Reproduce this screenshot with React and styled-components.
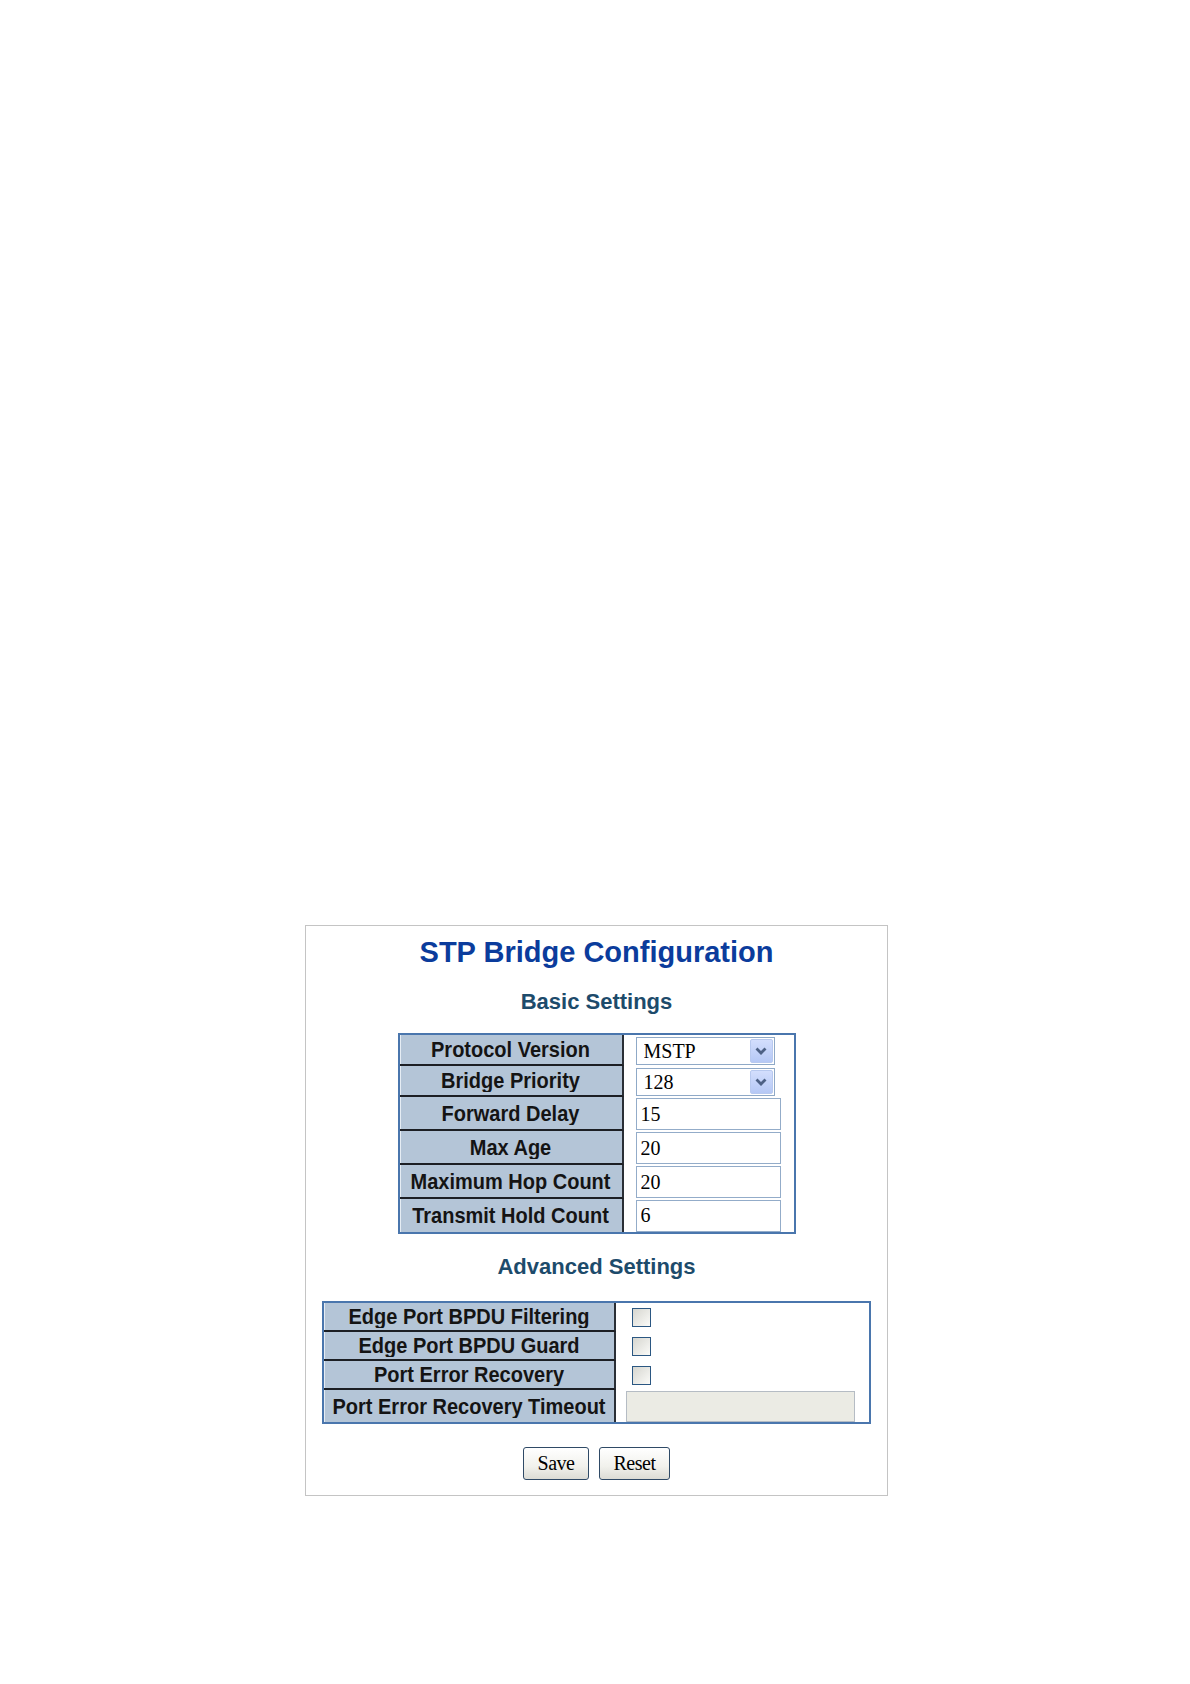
import styled, { createGlobalStyle } from "styled-components";

const GlobalStyle = createGlobalStyle`
  html, body {
    margin: 0;
    padding: 0;
    background: #fff;
    font-family: "Liberation Sans", Arial, sans-serif;
  }
`;

const Page = styled.div`
  width: 1190px;
  height: 1684px;
  padding-top: 925px;
  box-sizing: border-box;
`;

const Panel = styled.div`
  margin-left: 305px;
  width: 583px;
  box-sizing: border-box;
  border: 1px solid #c4c4c4;
  padding: 9px 0 15px;
  display: flex;
  flex-direction: column;
  align-items: center;
`;

const Title = styled.h1`
  margin: 0;
  font-size: 29px;
  line-height: 34px;
  font-weight: bold;
  color: #0b3c9c;
`;

const Section = styled.h2`
  margin: ${(p) => p.$top}px 0 0;
  font-size: 22px;
  line-height: 26px;
  font-weight: bold;
  color: #1d4b6b;
`;

const Table = styled.div`
  margin-top: ${(p) => p.$top}px;
  display: grid;
  grid-template-columns: ${(p) => p.$cols};
  border: 2px solid #4a76ad;
  background: #fff;
`;

const Label = styled.div`
  height: ${(p) => p.$h}px;
  box-sizing: border-box;
  background: #b4c5d7;
  border-right: 2px solid #2a2f36;
  border-bottom: ${(p) => (p.$last ? "none" : "2px solid #1c1f24")};
  box-shadow: inset 1px 0 0 #e6edf4;
  display: flex;
  align-items: center;
  justify-content: center;
  font-size: 20px;
  font-weight: bold;
  color: #141414;
  white-space: nowrap;
`;

const LabelText = styled.span`
  display: inline-block;
  transform: scaleY(1.08);
`;

const Value = styled.div`
  height: ${(p) => p.$h}px;
  box-sizing: border-box;
  padding-left: ${(p) => p.$pad}px;
  display: flex;
  align-items: center;
`;

const SelectWrap = styled.div`
  position: relative;
  width: 139px;
  height: 28px;
`;

const Select = styled.select`
  appearance: none;
  width: 100%;
  height: 100%;
  box-sizing: border-box;
  border: 1px solid #8fa9c7;
  background: #fff;
  padding: 0 0 0 7px;
  font-family: "Liberation Serif", "Times New Roman", serif;
  font-size: 20px;
  color: #000;
  outline: none;
`;

const Arrow = styled.div`
  position: absolute;
  top: 2px;
  right: 2px;
  width: 23px;
  height: 24px;
  border-radius: 2px;
  border: 1px solid #b8c9ef;
  box-sizing: border-box;
  background: linear-gradient(#d3defd, #b5c8f5);
  display: flex;
  align-items: center;
  justify-content: center;
  pointer-events: none;
`;

const TextInput = styled.input`
  width: ${(p) => p.$w}px;
  height: ${(p) => p.$hh}px;
  box-sizing: border-box;
  border: 1px solid #93acc9;
  padding: 0 0 0 4px;
  font-family: "Liberation Serif", "Times New Roman", serif;
  font-size: 20px;
  color: #000;
  background: ${(p) => (p.disabled ? "#ebebe4" : "#fff")};
  outline: none;
  &:disabled {
    border-color: #b5bcc4;
  }
`;

const Check = styled.input`
  appearance: none;
  margin: 0 0 0 4px;
  width: 19px;
  height: 19px;
  box-sizing: border-box;
  border: 1px solid #2b5782;
  background: linear-gradient(135deg, #d6d6d0, #fbfbf8);
`;

const Buttons = styled.div`
  margin-top: 23px;
  display: flex;
  gap: 10px;
`;

const Button = styled.button`
  width: ${(p) => p.$w}px;
  height: 33px;
  box-sizing: border-box;
  border: 1px solid #2f4a66;
  border-radius: 3px;
  background: linear-gradient(#ffffff, #f1f1ec 60%, #dcdcd5);
  font-family: "Liberation Serif", "Times New Roman", serif;
  font-size: 20px;
  color: #000;
  padding: 0;
  letter-spacing: -0.5px;
`;

const Chevron = () => (
  <svg width="14" height="10" viewBox="0 0 14 10">
    <polyline points="2.5,2.5 7,7 11.5,2.5" fill="none" stroke="#4d6185" strokeWidth="2.8" />
  </svg>
);

const basic = [
  { label: "Protocol Version", select: "MSTP", h: 31 },
  { label: "Bridge Priority", select: "128", h: 31 },
  { label: "Forward Delay", value: "15", h: 34 },
  { label: "Max Age", value: "20", h: 34 },
  { label: "Maximum Hop Count", value: "20", h: 34 },
  { label: "Transmit Hold Count", value: "6", h: 33 },
];

const advanced = [
  { label: "Edge Port BPDU Filtering", h: 29 },
  { label: "Edge Port BPDU Guard", h: 29 },
  { label: "Port Error Recovery", h: 29 },
  { label: "Port Error Recovery Timeout", h: 32, timeout: true },
];

const App = () => {
  return (
    <Page>
      <GlobalStyle />
      <Panel>
        <Title>STP Bridge Configuration</Title>
        <Section $top={20}>Basic Settings</Section>
        <Table $top={18} $cols="224px 170px">
          {basic.map((row, i) => [
            <Label key={row.label} $h={row.h} $last={i === basic.length - 1}>
              <LabelText>{row.label}</LabelText>
            </Label>,
            <Value key={row.label + "-v"} $h={row.h} $pad={12}>
              {row.select ? (
                <SelectWrap>
                  <Select defaultValue={row.select}>
                    <option>{row.select}</option>
                  </Select>
                  <Arrow>
                    <Chevron />
                  </Arrow>
                </SelectWrap>
              ) : (
                <TextInput $w={145} $hh={32} defaultValue={row.value} />
              )}
            </Value>,
          ])}
        </Table>
        <Section $top={20}>Advanced Settings</Section>
        <Table $top={21} $cols="292px 253px">
          {advanced.map((row, i) => [
            <Label key={row.label} $h={row.h} $last={i === advanced.length - 1}>
              <LabelText>{row.label}</LabelText>
            </Label>,
            <Value key={row.label + "-v"} $h={row.h} $pad={row.timeout ? 10 : 12}>
              {row.timeout ? (
                <TextInput $w={229} $hh={31} disabled />
              ) : (
                <Check type="checkbox" />
              )}
            </Value>,
          ])}
        </Table>
        <Buttons>
          <Button $w={66}>Save</Button>
          <Button $w={71}>Reset</Button>
        </Buttons>
      </Panel>
    </Page>
  );
};

export default App;
